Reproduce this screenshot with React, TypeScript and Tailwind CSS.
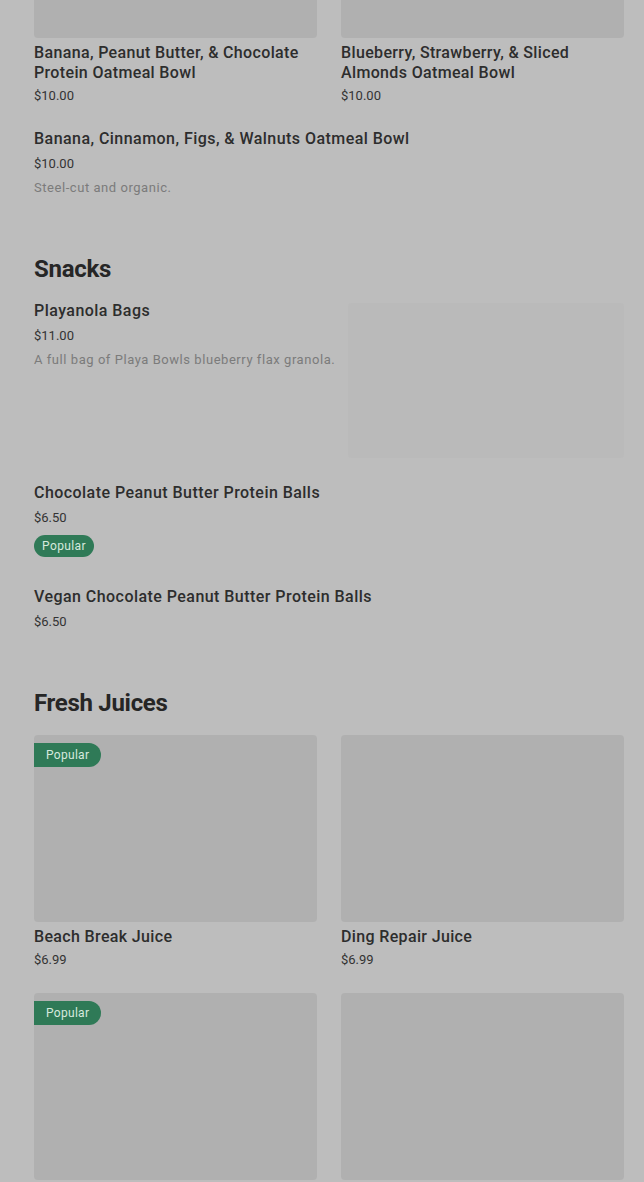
import React from "react";

type Item = { name: string; price: string; desc?: string; popular?: boolean };

const font = { fontFamily: "Roboto, 'Noto Sans', sans-serif" };

const Badge = () => (
  <span className="inline-flex h-[22px] items-center rounded-full bg-[#2f7a57] px-2 text-[12px] tracking-[0.4px] text-[#d6e9de]">
    Popular
  </span>
);

const GridCard = ({ item, imgH, cut }: { item: Item; imgH: number; cut?: boolean }) => (
  <div className="flex flex-col">
    <div
      className={`relative w-full bg-[#b0b0b0] ${cut ? "rounded-b-sm" : "rounded-sm"}`}
      style={{ height: imgH }}
    >
      {item.popular && (
        <span className="absolute left-0 top-2 flex h-6 items-center rounded-r-full bg-[#2f7a57] pl-3 pr-3 text-[12px] tracking-[0.3px] text-[#d6e9de]">
          Popular
        </span>
      )}
    </div>
    <h3 className="mt-[5px] text-[16px] font-medium leading-5 tracking-[0.35px] text-[#2d2d2d]">{item.name}</h3>
    <p className="mt-1 text-[13px] leading-[18px] text-[#333]">{item.price}</p>
  </div>
);

const ListItem = ({ item }: { item: Item }) => (
  <div className="flex flex-col">
    <h3 className="text-[16px] font-medium leading-5 tracking-[0.45px] text-[#2d2d2d]">{item.name}</h3>
    <p className="mt-1.5 text-[13px] leading-[18px] text-[#333]">{item.price}</p>
    {item.desc && (
      <p className="mt-1.5 text-[13px] leading-[18px] tracking-[0.55px] text-[#7b7b7b]">{item.desc}</p>
    )}
    {item.popular && (
      <div className="mt-1.5">
        <Badge />
      </div>
    )}
  </div>
);

export default function App() {
  return (
    <div className="min-h-[1182px] bg-[#bdbdbd] pl-[34px] pr-[20px]" style={font}>
      <div className="grid grid-cols-2 gap-x-6">
        <GridCard cut imgH={38} item={{ name: "Banana, Peanut Butter, & Chocolate Protein Oatmeal Bowl", price: "$10.00" }} />
        <GridCard cut imgH={38} item={{ name: "Blueberry, Strawberry, & Sliced Almonds Oatmeal Bowl", price: "$10.00" }} />
      </div>

      <div className="mt-6">
        <ListItem item={{ name: "Banana, Cinnamon, Figs, & Walnuts Oatmeal Bowl", price: "$10.00", desc: "Steel-cut and organic." }} />
      </div>

      <h2 className="mt-14 text-[24px] font-bold leading-8 tracking-[-0.3px] text-[#262626]">Snacks</h2>

      <div className="mt-4 flex gap-3">
        <div className="flex-1">
          <ListItem item={{ name: "Playanola Bags", price: "$11.00", desc: "A full bag of Playa Bowls blueberry flax granola." }} />
        </div>
        <div className="mt-0.5 h-[155px] w-[276px] rounded-sm bg-[#bababa]" />
      </div>

      <div className="mt-[25px]">
        <ListItem item={{ name: "Chocolate Peanut Butter Protein Balls", price: "$6.50", popular: true }} />
      </div>

      <div className="mt-[30px]">
        <ListItem item={{ name: "Vegan Chocolate Peanut Butter Protein Balls", price: "$6.50" }} />
      </div>

      <h2 className="mt-14 text-[24px] font-bold leading-8 tracking-[-0.3px] text-[#262626]">Fresh Juices</h2>

      <div className="mt-4 grid grid-cols-2 gap-x-6 gap-y-6">
        <GridCard imgH={187} item={{ name: "Beach Break Juice", price: "$6.99", popular: true }} />
        <GridCard imgH={187} item={{ name: "Ding Repair Juice", price: "$6.99" }} />
        <GridCard imgH={187} item={{ name: "Island Green Juice", price: "$6.99", popular: true }} />
        <GridCard imgH={187} item={{ name: "Tropical Juice", price: "$6.99" }} />
      </div>
    </div>
  );
}
